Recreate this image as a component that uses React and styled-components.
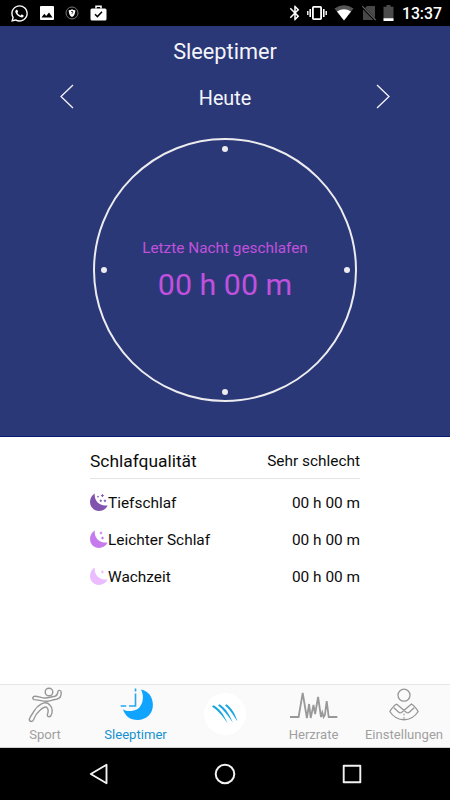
import React from 'react';
import styled, { createGlobalStyle } from 'styled-components';
import { FaWhatsapp } from 'react-icons/fa';
import { MdBluetooth } from 'react-icons/md';

const GlobalStyle = createGlobalStyle`
    * {
        box-sizing: border-box;
    }

    body {
        margin: 0;
        font-family: Roboto, 'Liberation Sans', sans-serif;
        background-color: white;
    }
`;

const Screen = styled.div`
    width: 450px;
    height: 800px;
    display: flex;
    flex-direction: column;
    overflow: hidden;
    background-color: white;
`;

const StatusBar = styled.div`
    height: 26px;
    flex: none;
    display: flex;
    align-items: center;
    justify-content: space-between;
    padding: 0 8px 0 10px;
    background-color: black;
    color: white;
`;

const StatusGroup = styled.div`
    display: flex;
    align-items: center;
    gap: ${({ $gap }) => $gap};

    svg {
        display: block;
        flex: none;
    }
`;

const BluetoothIcon = styled(MdBluetooth)`
    margin-right: -5px;
`;

const Clock = styled.span`
    font-size: 15.8px;
    font-weight: 500;
    line-height: 26px;
    padding-top: 1px;
`;

const Hero = styled.header`
    height: 411px;
    flex: none;
    display: flex;
    flex-direction: column;
    align-items: center;
    background-color: #2b3878;
    border-bottom: 1px solid #0a1a70;
    color: #f4f5fa;
`;

const Title = styled.h1`
    margin: 11px 0 0;
    font-size: 21.7px;
    font-weight: 400;
    line-height: 30px;
`;

const DayPicker = styled.div`
    width: 330px;
    height: 30px;
    margin-top: 16px;
    display: flex;
    align-items: flex-start;
    justify-content: space-between;
`;

const Day = styled.span`
    font-size: 19.8px;
    line-height: 31px;
`;

const ArrowButton = styled.button`
    border: 0;
    padding: 0;
    width: 14px;
    height: 26px;
    background: none;
    color: inherit;

    svg {
        display: block;
    }
`;

const Dial = styled.div`
    position: relative;
    width: 264px;
    height: 264px;
    margin-top: 25px;
    padding-top: 96px;
    border: 2px solid #ececee;
    border-radius: 50%;
    text-align: center;
    color: #c051dc;
`;

const Dot = styled.i`
    position: absolute;
    width: 6px;
    height: 6px;
    border-radius: 50%;
    background-color: #ececee;
    left: ${({ $x }) => $x}px;
    top: ${({ $y }) => $y}px;
`;

const DialLabel = styled.div`
    font-size: 15.35px;
    line-height: 24px;
`;

const DialValue = styled.div`
    margin-top: 6px;
    font-size: 30.4px;
    line-height: 38px;
`;

const Quality = styled.section`
    flex: 1;
    width: 270px;
    margin: 0 auto;
    color: #0c0c0c;
`;

const QualityHead = styled.div`
    height: 42px;
    padding-top: 7px;
    display: flex;
    align-items: center;
    justify-content: space-between;
    border-bottom: 1px solid #e4e4e4;
`;

const QualityTitle = styled.h2`
    margin: 0;
    font-size: 17.4px;
    font-weight: 400;
`;

const QualityText = styled.span`
    font-size: 15.4px;
    line-height: 20px;
`;

const QualityList = styled.div`
    padding-top: 5px;
`;

const QualityRow = styled.div`
    height: 37px;
    display: flex;
    align-items: center;
    padding-top: 1px;

    svg {
        display: block;
        margin-top: -3px;
    }

    ${QualityText}:last-child {
        margin-left: auto;
    }
`;

const TabBar = styled.nav`
    height: 64px;
    flex: none;
    display: flex;
    border-top: 1px solid #e6e6e6;
    border-bottom: 1px solid #d0d0d0;
    background-color: #fafafa;
`;

const Tab = styled.a`
    width: ${({ $width }) => $width || 90}px;
    padding-top: 2px;
    display: flex;
    flex-direction: column;
    align-items: center;
    color: ${({ $active }) => ($active ? '#1591cf' : '#a0a0a0')};

    svg {
        display: block;
        flex: none;
    }
`;

const TabLabel = styled.span`
    margin-top: 1px;
    font-size: 13.1px;
    line-height: 18px;
    white-space: nowrap;
`;

const LogoButton = styled.div`
    width: 42px;
    height: 42px;
    margin-top: 6px;
    border-radius: 50%;
    background-color: white;
`;

const SystemNav = styled.div`
    height: 52px;
    flex: none;
    display: flex;
    align-items: center;
    justify-content: space-between;
    padding: 0 88px;
    background-color: black;
`;

const PictureIcon = () => (
    <svg width="14" height="14" viewBox="0 0 14 14">
        <rect width="14" height="14" rx="1" fill="white" />
        <path d="M1.5 11.5L4.3 7.8L6.2 10L9 6.5L12.5 11.5Z" fill="black" />
    </svg>
);

const ShieldIcon = () => (
    <svg width="14" height="14" viewBox="0 0 14 14">
        <circle cx="7" cy="7" r="6" fill="none" stroke="#777" strokeWidth="1" />
        <path d="M3.7 4.2Q5.7 4.2 7 3.2Q8.3 4.2 10.3 4.2Q10.5 9 7 11Q3.5 9 3.7 4.2Z" fill="white" />
        <path d="M6 5.8Q7 4.7 8 5.8Q8 6.7 7 7.2V8.2" fill="none" stroke="#333" strokeWidth="0.9" />
    </svg>
);

const WorkIcon = () => (
    <svg width="17" height="16" viewBox="0 0 17 16">
        <path d="M6 3.5V1.3H11V3.5" fill="none" stroke="white" strokeWidth="1.5" />
        <rect x="0.5" y="3.4" width="16" height="12" rx="1.5" fill="white" />
        <path d="M5 9.3L7.4 11.6L12 6.8" fill="none" stroke="black" strokeWidth="1.5" />
    </svg>
);

const VibrateIcon = () => (
    <svg width="20" height="16" viewBox="0 0 20 16" fill="none" stroke="white">
        <rect x="5.9" y="1.9" width="8.2" height="12.2" rx="0.8" strokeWidth="1.8" />
        <path d="M3.2 4V12M16.8 4V12" strokeWidth="1.6" />
        <path d="M0.8 6V10M19.2 6V10" strokeWidth="1.4" />
    </svg>
);

const WifiIcon = () => (
    <svg width="20" height="16" viewBox="0 0 20 16">
        <path d="M0.5 3.4Q10 -3 19.5 3.4L10 15.5Z" fill="#555" />
        <path d="M3 6.5Q10 1.8 17 6.5L10 15.5Z" fill="white" />
    </svg>
);

const NoSimIcon = () => (
    <svg width="14" height="16" viewBox="0 0 14 16">
        <path d="M5 1H13V15H1V5Z" fill="#484848" />
        <path d="M0 1.5L13.5 15.5" stroke="black" strokeWidth="2.4" />
        <path d="M0.2 1.2L13.7 15" stroke="#626262" strokeWidth="1.2" />
    </svg>
);

const BatteryIcon = () => (
    <svg width="11" height="16" viewBox="0 0 11 16">
        <path d="M3.5 0H7.5V1.7H10.5V16H0.5V1.7H3.5Z" fill="#4b4b4b" />
        <rect x="0.5" y="13.2" width="10" height="2.8" rx="0.4" fill="white" />
    </svg>
);

const Chevron = ({ right }) => (
    <svg width="14" height="26" viewBox="0 0 14 26" fill="none" stroke="currentColor" strokeWidth="1.3">
        <path d={right ? 'M1 2L13 13.5L1 25' : 'M13 2L1 13.5L13 25'} />
    </svg>
);

const star = (x, y, r) =>
    `M${x} ${y - r}L${x + r * 0.4} ${y - r * 0.4}L${x + r} ${y}L${x + r * 0.4} ${y + r * 0.4}L${x} ${y + r}L${x - r * 0.4} ${y + r * 0.4}L${x - r} ${y}L${x - r * 0.4} ${y - r * 0.4}Z`;

const MoonIcon = ({ color, stars }) => (
    <svg width="18" height="18" viewBox="0 0 18 18" fill={color}>
        <path d="M4.8 0.4C4 6.8 8 13 17.7 12.6C15.7 16.3 12.7 18 9 18C4 18 0 14 0 9C0 5.2 1.8 2.1 4.8 0.4Z" />
        {stars.map(([x, y, r]) => (
            <path key={`${x}-${y}`} d={star(x, y, r)} />
        ))}
    </svg>
);

const SportIcon = () => (
    <svg width="36" height="38" viewBox="0 0 36 38" fill="none" stroke="#979797" strokeWidth="1.4" strokeLinejoin="round">
        <circle cx="22" cy="5" r="3.8" />
        <path d="M8 9.2C12 9.2 14 11 18 11C22 11 25 9.4 28 9.2C30.5 8.8 30.6 7 30.8 5C31 2.8 34 2.8 34.2 5.2C34.4 8.5 33.5 11.5 29.5 12.2C26 12.4 24.5 14.2 20.5 14.3C15 14.4 11.5 12.8 7.2 12.6C5 12.2 5.5 9.2 8 9.2Z" />
        <path d="M14 17.2C17 15.4 20.5 15.4 22.8 18C25.6 20.8 26 25.5 23.8 28.8C22.5 30.5 20 29.8 20.4 27.8C21.3 25.2 22 22.2 19.6 20.2C17.5 19.2 15.2 21.3 13 23.2C9 26.5 7.8 29 6.6 32.6C5.8 35.2 2.2 35 2.3 32.2C4.2 27.8 5.3 27.3 7 24.2C9 20.8 11 18.8 14 17.2Z" />
    </svg>
);

const SleepIcon = () => (
    <svg width="34" height="38" viewBox="-1.5 0 34 38">
        <path d="M20.5 2.5C24.5 10 21.8 19.5 16.7 22.3C12 24.8 5.5 24.6 2.5 22.2C4.6 29 9.7 33 17 33C26 33 32.4 26.5 32.4 18C32.4 10 28 4 20.5 2.5Z" fill="#10a4ff" />
        <path d="M15 1.5V4.5M15 6.5V19H8.5M5.7 19H0.2" fill="none" stroke="#26a5f2" strokeWidth="1.6" />
    </svg>
);

const LogoMark = () => (
    <svg width="42" height="42" viewBox="0 0 42 42" fill="#18a5df">
        <path d="M8 13.5L9.4 12.3C15.5 15.5 20 21.7 23.4 30C18 22.2 13.5 17 8 13.5Z" />
        <path d="M14 12.2L15.6 11.2C21 14.8 25.5 20.8 28.8 29.5C23.5 22 19.5 16.5 14 12.2Z" />
        <path d="M21 12.2L22.6 11.2C27.5 15.2 31 20.3 33.5 28.5C29 21.5 26 16.8 21 12.2Z" />
    </svg>
);

const HeartIcon = () => (
    <svg width="48" height="38" viewBox="-0.3 0 48 38" fill="none" stroke="#999" strokeWidth="1.8">
        <path d="M-0.5 30H8.3L12.4 6L16.6 31L18.8 17L20.4 31L23.2 18L24.8 27L27.8 10L30.7 30L32 25.5L33.3 30L34.6 28L36.4 14L38.4 30H47" />
    </svg>
);

const UserIcon = () => (
    <svg width="30" height="38" viewBox="0 0 30 38" fill="none" stroke="#969696" strokeWidth="1.3" strokeLinejoin="round">
        <circle cx="15" cy="8.2" r="6" />
        <path d="M7.5 17C5 18.5 3 21 0.8 24.5C8 35.5 22 35.5 29.2 24.5C27 21 25 18.5 22.5 17L12.5 25.5C11.5 26 10.5 26 9.5 25L4.8 20.8M7.5 17L17.5 25.5C18.5 26 19.5 26 20.5 25L25.2 20.8" />
        <path d="M15 26.5V28.5M15 30V32" strokeWidth="1" />
    </svg>
);

const qualityData = [
    {
        name: 'Tiefschlaf',
        value: '00 h 00 m',
        color: '#8053af',
        stars: [[8, 3.7, 1.1], [12.4, 2.6, 1.8], [10.8, 7.8, 1.5], [15, 7.8, 1.6]],
    },
    {
        name: 'Leichter Schlaf',
        value: '00 h 00 m',
        color: '#c57bee',
        stars: [[11, 3, 1.6], [12.5, 8, 1.8]],
    },
    {
        name: 'Wachzeit',
        value: '00 h 00 m',
        color: '#ebbcff',
        stars: [[12.4, 5, 1.8]],
    },
];

const App = () => {
    return (
        <>
            <GlobalStyle />
            <Screen>
                <StatusBar>
                    <StatusGroup $gap="11px">
                        <FaWhatsapp size={19} />
                        <PictureIcon />
                        <ShieldIcon />
                        <WorkIcon />
                    </StatusGroup>
                    <StatusGroup $gap="7.5px">
                        <BluetoothIcon size={18} />
                        <VibrateIcon />
                        <WifiIcon />
                        <NoSimIcon />
                        <BatteryIcon />
                        <Clock>13:37</Clock>
                    </StatusGroup>
                </StatusBar>

                <Hero>
                    <Title>Sleeptimer</Title>
                    <DayPicker>
                        <ArrowButton aria-label="Zurück">
                            <Chevron />
                        </ArrowButton>
                        <Day>Heute</Day>
                        <ArrowButton aria-label="Weiter">
                            <Chevron right />
                        </ArrowButton>
                    </DayPicker>
                    <Dial>
                        <Dot $x={127} $y={6} />
                        <Dot $x={249} $y={127} />
                        <Dot $x={127} $y={249} />
                        <Dot $x={6} $y={127} />
                        <DialLabel>Letzte Nacht geschlafen</DialLabel>
                        <DialValue>00 h 00 m</DialValue>
                    </Dial>
                </Hero>

                <Quality>
                    <QualityHead>
                        <QualityTitle>Schlafqualität</QualityTitle>
                        <QualityText>Sehr schlecht</QualityText>
                    </QualityHead>
                    <QualityList>
                        {qualityData.map((item) => (
                            <QualityRow key={item.name}>
                                <MoonIcon color={item.color} stars={item.stars} />
                                <QualityText>{item.name}</QualityText>
                                <QualityText>{item.value}</QualityText>
                            </QualityRow>
                        ))}
                    </QualityList>
                </Quality>

                <TabBar>
                    <Tab>
                        <SportIcon />
                        <TabLabel>Sport</TabLabel>
                    </Tab>
                    <Tab $active $width={91}>
                        <SleepIcon />
                        <TabLabel>Sleeptimer</TabLabel>
                    </Tab>
                    <Tab $width={87}>
                        <LogoButton>
                            <LogoMark />
                        </LogoButton>
                    </Tab>
                    <Tab $width={91}>
                        <HeartIcon />
                        <TabLabel>Herzrate</TabLabel>
                    </Tab>
                    <Tab>
                        <UserIcon />
                        <TabLabel>Einstellungen</TabLabel>
                    </Tab>
                </TabBar>

                <SystemNav>
                    <svg width="20" height="22" viewBox="0 0 20 22" fill="none" stroke="#f2f2f2" strokeWidth="1.9" strokeLinejoin="round">
                        <path d="M18.5 1.8V20.2L2.8 11Z" />
                    </svg>
                    <svg width="22" height="22" viewBox="0 0 22 22" fill="none" stroke="#f2f2f2" strokeWidth="2">
                        <circle cx="11" cy="11" r="9.3" />
                    </svg>
                    <svg width="20" height="20" viewBox="0 0 20 20" fill="none" stroke="#f2f2f2" strokeWidth="1.9" strokeLinejoin="round">
                        <rect x="1.7" y="1.7" width="16.6" height="16.6" />
                    </svg>
                </SystemNav>
            </Screen>
        </>
    );
};

export default App;
